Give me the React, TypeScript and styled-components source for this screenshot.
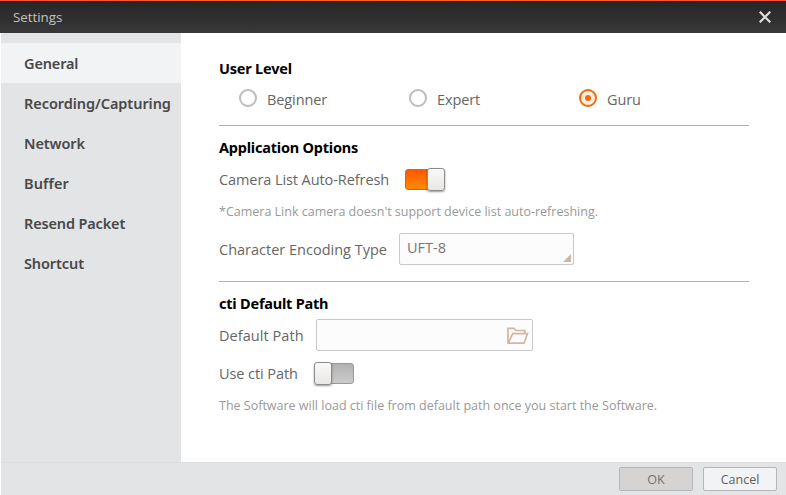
import React from 'react';
import styled, { createGlobalStyle, css } from 'styled-components';

const GlobalStyle = createGlobalStyle`
  *, *::before, *::after { box-sizing: border-box; }
  body { margin: 0; background: #fff; font-family: "Open Sans", "Noto Sans", sans-serif; }
  button { font: inherit; padding: 0; margin: 0; }
`;

const Window = styled.div`
  width: 786px;
  height: 495px;
  display: flex;
  flex-direction: column;
  background: #fff;
  overflow: hidden;
  white-space: nowrap;
`;

const TitleBar = styled.header`
  height: 33px;
  flex: none;
  display: flex;
  align-items: center;
  justify-content: space-between;
  padding: 0 15px 0 13px;
  background:
    linear-gradient(90deg, #ff5038, #ff6418 50%, #ff5038) top / 100% 1px no-repeat,
    linear-gradient(#252525, #383838);
  color: #c2c2c2;
  font-size: 13.3px;
`;

const CloseButton = styled.button`
  display: flex;
  border: 0;
  background: none;
`;

const Body = styled.div`
  flex: 1;
  display: flex;
  min-height: 0;
`;

const Sidebar = styled.nav`
  width: 180px;
  margin-left: 1px;
  padding-top: 10px;
  background: #e2e4e6;
`;

const NavItem = styled.div<{ $active?: boolean; $spacing?: number }>`
  height: 40px;
  padding: 0 0 1px 23px;
  display: flex;
  align-items: center;
  font: 600 14.5px "Noto Sans", sans-serif;
  letter-spacing: ${p => p.$spacing ?? 0}px;
  color: #484848;
  ${p => p.$active && css`background: #f1f3f5;`}
`;

const Content = styled.main`
  flex: 1;
  padding: 25px 37px 0 38px;
  color: #666;
  font-size: 14.5px;
`;

const Section = styled.section<{ $height: number }>`
  height: ${p => p.$height}px;
  padding-top: 11px;
  &:first-child { padding-top: 0; }
  & + & { border-top: 1px solid #b1b1b1; }
`;

const Heading = styled.h2`
  margin: 0;
  font: 700 14.5px/20px "Noto Sans", sans-serif;
  letter-spacing: -0.21px;
  color: #000;
`;

const Row = styled.div<{ $height: number; $gap?: number; $top?: number }>`
  height: ${p => p.$height}px;
  margin-top: ${p => p.$top ?? 0}px;
  display: flex;
  align-items: center;
  gap: ${p => p.$gap ?? 0}px;
`;

const RadioGroup = styled.div`
  display: grid;
  grid-template-columns: repeat(3, 170px);
  padding: 11px 0 0 20px;
`;

const RadioOption = styled.label`
  height: 20px;
  display: flex;
  align-items: flex-start;
  gap: 10px;
  line-height: 21px;
  letter-spacing: -0.1px;
`;

const RadioCircle = styled.span<{ $checked?: boolean }>`
  width: 18px;
  height: 18px;
  display: grid;
  place-items: center;
  border: 2px solid ${p => (p.$checked ? '#f56a08' : '#bcbcbc')};
  border-radius: 50%;
  background: ${p => (p.$checked ? '#faeee6' : '#fff')};
  &::after {
    content: '';
    width: 6px;
    height: 6px;
    border-radius: 50%;
    background: ${p => (p.$checked ? '#f56a08' : 'transparent')};
  }
`;

const FieldLabel = styled.span<{ $width: number; $spacing?: number }>`
  width: ${p => p.$width}px;
  flex: none;
  padding-top: 2px;
  line-height: 20px;
  letter-spacing: ${p => p.$spacing ?? 0}px;
`;

const Track = styled.span<{ $on?: boolean }>`
  width: 40px;
  height: 21px;
  display: flex;
  align-items: center;
  justify-content: ${p => (p.$on ? 'flex-end' : 'flex-start')};
  border: 1px solid ${p => (p.$on ? '#c66834' : '#999')};
  border-radius: 3px;
  background: ${p => (p.$on ? 'linear-gradient(#fc5800, #ff8a00)' : 'linear-gradient(#b1b1b1, #cbcbcb)')};
`;

const Thumb = styled.span`
  width: 18px;
  height: 23px;
  flex: none;
  margin: 0 -1px;
  border: 1px solid #8c8c8c;
  border-radius: 3px;
  background: linear-gradient(#faf9f7, #e8e7e6);
  box-shadow: 0 1px 2px rgba(0, 0, 0, 0.4);
`;

const Note = styled.p`
  margin: 0;
  font-size: 12.5px;
  line-height: 20px;
  color: #999;
`;

const Field = styled.div<{ $width: number }>`
  width: ${p => p.$width}px;
  height: 32px;
  display: flex;
  justify-content: space-between;
  border: 1px solid #c9c9c9;
  border-radius: 2px;
  background: #fcfcfc;
  color: #777;
  line-height: 28px;
  padding: 0 2px 0 7px;
`;

const SelectCorner = styled.svg`
  align-self: flex-end;
  margin-bottom: 2px;
`;

const FolderIcon = styled.svg`
  align-self: center;
  margin: 1px 1px 0 auto;
`;

const Footer = styled.footer`
  height: 33px;
  flex: none;
  display: flex;
  justify-content: flex-end;
  gap: 10px;
  margin-left: 1px;
  padding: 4px 9px 0 0;
  border-top: 1px solid #dcdee0;
  background: #e2e4e6;
`;

const FooterButton = styled.button<{ $disabled?: boolean }>`
  width: 74px;
  height: 24px;
  padding-top: 1px;
  border: 1px solid #b5b5b7;
  border-radius: 2px;
  background: ${p => (p.$disabled ? '#d6d4d2' : '#f1f3f5')};
  color: ${p => (p.$disabled ? '#707070' : '#606060')};
  font-size: 12.5px;
  line-height: 22px;
`;

const navItems: { label: string; spacing: number }[] = [
  { label: 'General', spacing: -0.15 },
  { label: 'Recording/Capturing', spacing: -0.06 },
  { label: 'Network', spacing: -0.1 },
  { label: 'Buffer', spacing: 0.1 },
  { label: 'Resend Packet', spacing: -0.15 },
  { label: 'Shortcut', spacing: -0.1 },
];

export default function App() {
  return (
    <Window>
      <GlobalStyle />
      <TitleBar>
        <span>Settings</span>
        <CloseButton aria-label="Close">
          <svg width="12" height="12" viewBox="0 0 12 12" stroke="#dedede" strokeWidth="2.2">
            <path d="M.7.7 11.3 11.3M11.3.7.7 11.3" />
          </svg>
        </CloseButton>
      </TitleBar>
      <Body>
        <Sidebar>
          {navItems.map((item, i) => (
            <NavItem key={item.label} $active={i === 0} $spacing={item.spacing}>{item.label}</NavItem>
          ))}
        </Sidebar>
        <Content>
          <Section $height={67}>
            <Heading>User Level</Heading>
            <RadioGroup>
              {['Beginner', 'Expert', 'Guru'].map(level => (
                <RadioOption key={level}>
                  <RadioCircle $checked={level === 'Guru'} />
                  {level}
                </RadioOption>
              ))}
            </RadioGroup>
          </Section>
          <Section $height={156}>
            <Heading>Application Options</Heading>
            <Row $height={24} $top={10}>
              <FieldLabel $width={186} $spacing={-0.08}>Camera List Auto-Refresh</FieldLabel>
              <Track $on><Thumb /></Track>
            </Row>
            <Row $height={20} $top={11}>
              <Note>*Camera Link camera doesn't support device list auto-refreshing.</Note>
            </Row>
            <Row $height={32} $top={11}>
              <FieldLabel $width={180}>Character Encoding Type</FieldLabel>
              <Field $width={175}>
                UFT-8
                <SelectCorner width="8" height="8"><path d="M8 0V8H0Z" fill="#d3b5a4" /></SelectCorner>
              </Field>
            </Row>
          </Section>
          <Section $height={150}>
            <Heading>cti Default Path</Heading>
            <Row $height={32} $top={6}>
              <FieldLabel $width={97} $spacing={0.06}>Default Path</FieldLabel>
              <Field $width={217}>
                <FolderIcon width="22" height="18" viewBox="0 0 22 18" fill="none" stroke="#d3b5a4" strokeWidth="1.7">
                  <path d="M1 15.8V1.3H7L9 3.5H17.8V6.5M1.3 16.2 5.7 6.7H20.5L17 16.2Z" />
                </FolderIcon>
              </Field>
            </Row>
            <Row $height={24} $top={10}>
              <FieldLabel $width={95} $spacing={-0.07}>Use cti Path</FieldLabel>
              <Track><Thumb /></Track>
            </Row>
            <Row $height={20} $top={11}>
              <Note>The Software will load cti file from default path once you start the Software.</Note>
            </Row>
          </Section>
        </Content>
      </Body>
      <Footer>
        <FooterButton $disabled>OK</FooterButton>
        <FooterButton>Cancel</FooterButton>
      </Footer>
    </Window>
  );
}
